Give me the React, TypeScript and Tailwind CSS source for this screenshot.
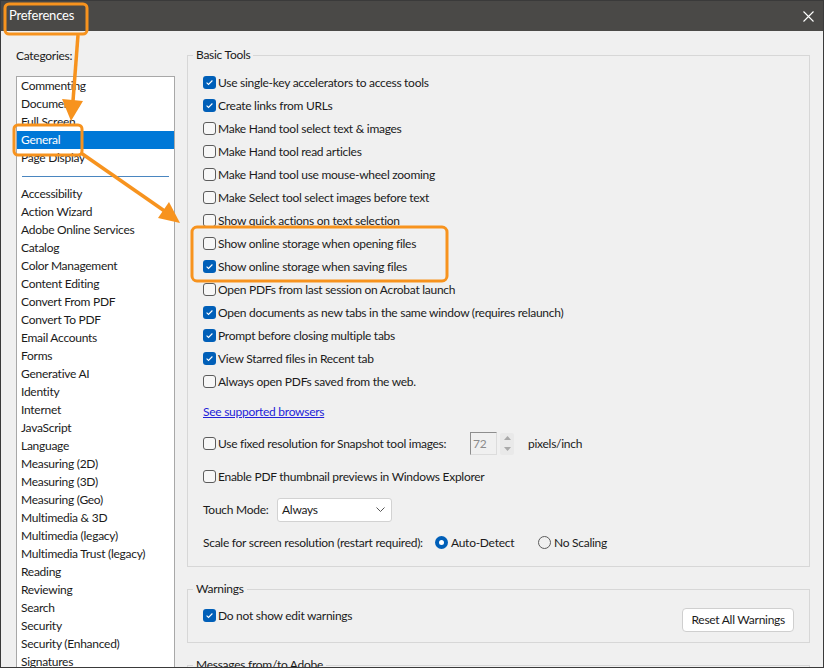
import React from 'react';

type Option = { label: string; checked?: boolean };

const topCategories = ['Commenting', 'Documents', 'Full Screen', 'General', 'Page Display'];

const categories = [
  'Accessibility',
  'Action Wizard',
  'Adobe Online Services',
  'Catalog',
  'Color Management',
  'Content Editing',
  'Convert From PDF',
  'Convert To PDF',
  'Email Accounts',
  'Forms',
  'Generative AI',
  'Identity',
  'Internet',
  'JavaScript',
  'Language',
  'Measuring (2D)',
  'Measuring (3D)',
  'Measuring (Geo)',
  'Multimedia & 3D',
  'Multimedia (legacy)',
  'Multimedia Trust (legacy)',
  'Reading',
  'Reviewing',
  'Search',
  'Security',
  'Security (Enhanced)',
  'Signatures',
  'Spelling',
  'Tracker',
];

const basicTools: Option[] = [
  { label: 'Use single-key accelerators to access tools', checked: true },
  { label: 'Create links from URLs', checked: true },
  { label: 'Make Hand tool select text & images' },
  { label: 'Make Hand tool read articles' },
  { label: 'Make Hand tool use mouse-wheel zooming' },
  { label: 'Make Select tool select images before text' },
  { label: 'Show quick actions on text selection' },
  { label: 'Show online storage when opening files' },
  { label: 'Show online storage when saving files', checked: true },
  { label: 'Open PDFs from last session on Acrobat launch' },
  { label: 'Open documents as new tabs in the same window (requires relaunch)', checked: true },
  { label: 'Prompt before closing multiple tabs', checked: true },
  { label: 'View Starred files in Recent tab', checked: true },
  { label: 'Always open PDFs saved from the web.' },
];

function Checkbox({ checked }: { checked?: boolean }) {
  if (checked) {
    return (
      <span className="flex h-[13px] w-[13px] shrink-0 items-center justify-center rounded-[3px] bg-[#005fb8]">
        <svg width="9" height="9" viewBox="0 0 9 9">
          <path d="M1.6 4.7 L3.5 6.5 L7.4 2.5" fill="none" stroke="#ffffff" strokeWidth="1.1" />
        </svg>
      </span>
    );
  }
  return <span className="h-[13px] w-[13px] shrink-0 rounded-[3px] border border-[#5c5c5c] bg-[#f7f7f7]" />;
}

function CheckRow({ label, checked }: Option) {
  return (
    <div className="flex h-[23px] items-center gap-[2px]">
      <Checkbox checked={checked} />
      <span className="whitespace-nowrap">{label}</span>
    </div>
  );
}

function Radio({ checked }: { checked?: boolean }) {
  return checked ? (
    <span className="flex h-[13px] w-[13px] shrink-0 items-center justify-center rounded-full bg-[#005fb8]">
      <span className="h-[5px] w-[5px] rounded-full bg-white" />
    </span>
  ) : (
    <span className="h-[13px] w-[13px] shrink-0 rounded-full border border-[#5c5c5c]" />
  );
}

function Group({ title, children, className = '' }: { title: string; children: React.ReactNode; className?: string }) {
  return (
    <fieldset className={`border border-[#d7d7d7] px-[5px] ${className}`}>
      <legend className="px-[3px] leading-4">{title}</legend>
      {children}
    </fieldset>
  );
}

function Annotations() {
  const o = '#f7931e';
  return (
    <svg className="pointer-events-none absolute left-0 top-0" width="824" height="668" viewBox="0 0 824 668">
      <rect x="4" y="3" width="82" height="30" rx="4" fill="none" stroke={o} strokeWidth="3" />
      <line x1="77" y1="34" x2="72" y2="100" stroke={o} strokeWidth="3.5" />
      <polygon points="61,98 82,100 70,120" fill={o} />
      <rect x="13" y="124" width="68" height="30" rx="4" fill="none" stroke={o} strokeWidth="3" />
      <line x1="80" y1="152" x2="165" y2="211" stroke={o} strokeWidth="3.5" />
      <polygon points="157,217 168,201 179,222" fill={o} />
      <rect x="191" y="226" width="255" height="54" rx="5" fill="none" stroke={o} strokeWidth="3" />
    </svg>
  );
}

export default function App() {
  return (
    <div
      className="relative flex h-[668px] w-[824px] flex-col overflow-hidden border border-[#3a3a3a] bg-[#f0f0f0] text-[12px] tracking-[-0.27px] text-[#1b1b1b]"
      style={{ fontFamily: 'Lato, "Open Sans", sans-serif' }}
    >
      {/* title bar */}
      <div className="flex h-[30px] shrink-0 items-center justify-between bg-[#4a4947] pl-[8px] pr-[9px]">
        <span className="text-[13px] tracking-[-0.2px] text-white">Preferences</span>
        <svg width="11" height="11" viewBox="0 0 11 11">
          <path d="M0.5 0.5 L10.5 10.5 M10.5 0.5 L0.5 10.5" stroke="#ffffff" strokeWidth="1.1" />
        </svg>
      </div>

      <div className="flex min-h-0 flex-1">
        {/* categories */}
        <div className="flex w-[174px] shrink-0 flex-col pl-[15px] pt-[17px]">
          <div className="leading-4">Categories:</div>
          <div className="mt-[12px] flex-1 overflow-hidden border border-b-0 border-[#a8a8a8] bg-white p-0">
            {topCategories.map((c) => (
              <div
                key={c}
                className={`flex h-[18px] items-center pl-[4px] ${c === 'General' ? 'bg-[#0078d7] text-white' : ''}`}
              >
                {c}
              </div>
            ))}
            <div className="flex h-[18px] items-center px-[5px]">
              <div className="h-px w-full bg-[#4a86c0]" />
            </div>
            {categories.map((c) => (
              <div key={c} className="flex h-[18px] items-center whitespace-nowrap pl-[4px]">
                {c}
              </div>
            ))}
          </div>
        </div>

        {/* settings */}
        <div className="ml-[12px] mr-[13px] flex min-w-0 flex-1 flex-col pt-[16px]">
          <Group title="Basic Tools">
            <div className="pb-[12px] pl-[10px] pt-[8px]">
              {basicTools.map((t) => (
                <CheckRow key={t.label} {...t} />
              ))}
              <div className="mt-[7px] flex h-[23px] items-center">
                <span className="text-[#2323d8] underline">See supported browsers</span>
              </div>
              <div className="mt-[9px] flex h-[23px] items-center">
                <Checkbox />
                <span className="ml-[2px] w-[252px] whitespace-nowrap">Use fixed resolution for Snapshot tool images:</span>
                <div className="flex h-[23px] w-[27px] items-center border border-b-[#dcdcdc] border-l-[#8e8e8e] border-r-[#dcdcdc] border-t-[#8e8e8e] pl-[2px] text-[#8c8c8c]">
                  72
                </div>
                <div className="ml-[3px] flex h-[22px] w-[14px] flex-col items-center justify-around rounded-[2px] bg-[#e9e9e9]">
                  <svg width="7" height="4" viewBox="0 0 7 4">
                    <polygon points="0,4 7,4 3.5,0" fill="#a9a9a9" />
                  </svg>
                  <svg width="7" height="4" viewBox="0 0 7 4">
                    <polygon points="0,0 7,0 3.5,4" fill="#a9a9a9" />
                  </svg>
                </div>
                <span className="ml-[14px]">pixels/inch</span>
              </div>
              <div className="mt-[10px]">
                <CheckRow label="Enable PDF thumbnail previews in Windows Explorer" />
              </div>
              <div className="mt-[10px] flex h-[23px] items-center">
                <span className="w-[74px]">Touch Mode:</span>
                <div className="flex h-[24px] w-[115px] items-center justify-between rounded-[3px] border border-[#d2d2d2] bg-white pl-[4px] pr-[6px]">
                  <span>Always</span>
                  <svg width="9" height="5" viewBox="0 0 9 5">
                    <path d="M0.5 0.5 L4.5 4.5 L8.5 0.5" fill="none" stroke="#555" strokeWidth="1" />
                  </svg>
                </div>
              </div>
              <div className="mt-[10px] flex h-[23px] items-center">
                <span className="w-[232px] shrink-0 whitespace-nowrap">Scale for screen resolution (restart required):</span>
                <div className="flex w-[103px] items-center gap-[3px]">
                  <Radio checked />
                  <span>Auto-Detect</span>
                </div>
                <div className="flex items-center gap-[3px]">
                  <Radio />
                  <span>No Scaling</span>
                </div>
              </div>
            </div>
          </Group>

          <Group title="Warnings" className="mt-[14px]">
            <div className="flex items-start justify-between pb-[10px] pl-[10px] pr-[10px]">
              <div className="mt-[7px]">
                <CheckRow label="Do not show edit warnings" checked />
              </div>
              <div className="mt-[11px] flex h-[24px] items-center rounded-[4px] border border-[#cfcfcf] bg-white px-[8px]">
                Reset All Warnings
              </div>
            </div>
          </Group>

          <Group title="Messages from/to Adobe" className="mt-[14px]">
            <div className="h-[40px]" />
          </Group>
        </div>
      </div>

      <Annotations />
    </div>
  );
}
